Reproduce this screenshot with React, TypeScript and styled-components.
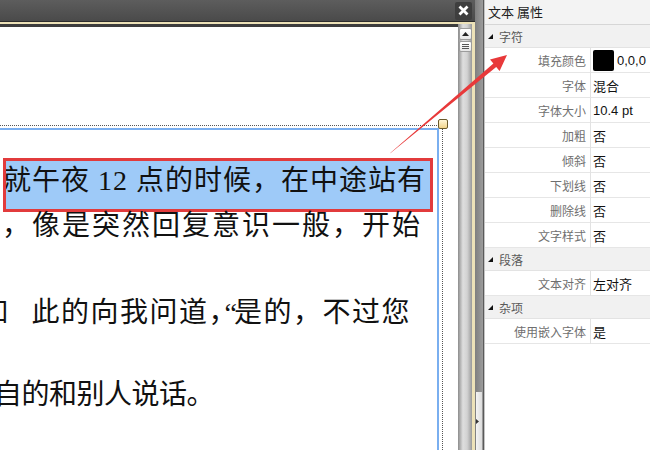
import styled, { createGlobalStyle } from "styled-components";

const GlobalStyle = createGlobalStyle`
  html, body {
    margin: 0;
    padding: 0;
    background: #fff;
    overflow: hidden;
  }
  #root {
    width: 650px;
    height: 450px;
  }
`;

const Screen = styled.div`
  position: relative;
  display: flex;
  width: 650px;
  height: 450px;
  overflow: hidden;
  font-family: "Noto Sans CJK SC", sans-serif;
`;

// left: document editor
const EditorPane = styled.div`
  display: flex;
  flex-direction: column;
  flex-shrink: 0;
  width: 475px;
`;

const TitleBar = styled.div`
  display: flex;
  justify-content: flex-end;
  align-items: center;
  box-sizing: border-box;
  height: 22px;
  padding-right: 3px;
  background: linear-gradient(#5d5d5d, #4a4a4a);
  border-bottom: 1px solid #2c2c2c;
`;

const CloseButton = styled.div`
  display: flex;
  justify-content: center;
  align-items: center;
  width: 17px;
  height: 18px;
  border-radius: 2px;
  background: #3e3e3e;
`;

const Frame = styled.div`
  display: flex;
  flex: 1;
  min-height: 0;
  border-top: 2px solid #ede2b8;
  border-right: 3px solid #ede2b8;
`;

const DocArea = styled.div`
  display: flex;
  flex-direction: column;
  flex: 1;
  min-width: 0;
  overflow: hidden;
  padding-top: 98px;
  background: #fff;
  border-top: 3px solid #3d3d3d;
`;

const TextFrame = styled.div`
  position: relative;
  flex: 1;
  margin-right: 15px;
  padding: 2px 3px 0 0;
  border-top: 1px dotted #555;
  border-right: 1px dotted #555;
`;

const Handle = styled.div`
  position: absolute;
  top: -7px;
  right: -6px;
  box-sizing: border-box;
  width: 10px;
  height: 10px;
  border: 1px solid #6b5a2a;
  border-radius: 2px;
  background: linear-gradient(#fff6d6, #f2d48a);
`;

const BlueBox = styled.div`
  height: 100%;
  padding-top: 28px;
  border-top: 2px solid #7aaff0;
  border-right: 2px solid #7aaff0;
`;

const Selection = styled.div`
  margin: 0 4px 0 3px;
  padding: 4px 0 12px;
  border: 3px solid #e23b3c;
  background: #9ecaf8;
  overflow: hidden;
`;

const Line = styled.div<{ $spacing: number; $shift: number; $gap?: number }>`
  height: 32px;
  margin-top: ${(p) => p.$gap ?? 0}px;
  margin-left: ${(p) => p.$shift}px;
  font-family: "Liberation Serif", "Noto Sans CJK SC", serif;
  font-size: 28px;
  line-height: 32px;
  letter-spacing: ${(p) => p.$spacing}px;
  white-space: nowrap;
  color: #111;
`;

const Cut = styled.span`
  margin-right: 22px;
`;

const Punct = styled.span<{ $squeeze: number }>`
  letter-spacing: ${(p) => p.$squeeze}px;
`;

const VScroll = styled.div`
  display: flex;
  flex-direction: column;
  align-items: center;
  gap: 1px;
  width: 14px;
  padding-top: 4px;
  background: linear-gradient(to right, #8c8c8c, #dedede 35%, #d2d2d2 65%, #9a9a9a);
`;

const ScrollPart = styled.div<{ $h: number }>`
  display: flex;
  justify-content: center;
  align-items: center;
  box-sizing: border-box;
  width: 13px;
  height: ${(p) => p.$h}px;
  border: 1px solid #9c9c9c;
  border-radius: 2px;
  background: linear-gradient(#ffffff, #e6e6e6);
`;

const Splitter = styled.div`
  display: flex;
  flex-direction: column;
  justify-content: flex-end;
  flex-shrink: 0;
  width: 8px;
  background: linear-gradient(to right, #7f7f7f, #9c9c9c);
  border-right: 1px solid #5a5a5a;
`;

const SplitHandle = styled.div`
  display: flex;
  align-items: center;
  width: 6px;
  height: 58px;
  margin-left: 1px;
  background: linear-gradient(to right, #f4f4f4, #dcdcdc);
`;

// right: properties panel
const Panel = styled.div`
  flex: 1;
  background: #fff;
  border-left: 1px solid #c4c4c4;
`;

const PanelHeader = styled.div`
  box-sizing: border-box;
  height: 25px;
  padding-left: 3px;
  font-size: 13px;
  line-height: 24px;
  color: #1e1e1e;
  background: #f3f3f3;
  border-bottom: 1px solid #d6d6d6;
`;

const Category = styled.div`
  display: flex;
  align-items: center;
  gap: 6px;
  box-sizing: border-box;
  height: 23px;
  padding-left: 3px;
  font-size: 12px;
  color: #5a5a5a;
  background: #f1f1f1;
  border-bottom: 1px solid #e3e3e3;
`;

const Row = styled.div`
  display: grid;
  grid-template-columns: 106px 1fr;
  box-sizing: border-box;
  height: 25px;
  border-bottom: 1px solid #e6e6e6;
`;

const Label = styled.div`
  box-sizing: border-box;
  padding-right: 4px;
  font-size: 12px;
  line-height: 25px;
  text-align: right;
  color: #6f6f6f;
  border-right: 1px solid #e2e2e2;
`;

const Value = styled.div`
  display: flex;
  align-items: center;
  gap: 3px;
  padding-left: 2px;
  font-family: "Liberation Sans", "Noto Sans CJK SC", sans-serif;
  font-size: 13px;
  color: #111;
`;

const Swatch = styled.div<{ $color: string }>`
  width: 21px;
  height: 21px;
  border-radius: 2px;
  background: ${(p) => p.$color};
`;

const Overlay = styled.svg`
  position: absolute;
  top: 0;
  left: 0;
  pointer-events: none;
`;

type Prop = { label: string; value: string; swatch?: string };

const sections: { title: string; rows: Prop[] }[] = [
  {
    title: "字符",
    rows: [
      { label: "填充颜色", value: "0,0,0", swatch: "#000" },
      { label: "字体", value: "混合" },
      { label: "字体大小", value: "10.4 pt" },
      { label: "加粗", value: "否" },
      { label: "倾斜", value: "否" },
      { label: "下划线", value: "否" },
      { label: "删除线", value: "否" },
      { label: "文字样式", value: "否" },
    ],
  },
  { title: "段落", rows: [{ label: "文本对齐", value: "左对齐" }] },
  { title: "杂项", rows: [{ label: "使用嵌入字体", value: "是" }] },
];

const Caret = () => (
  <svg width="5" height="5" viewBox="0 0 5 5">
    <polygon points="5,0 5,5 0,5" fill="#111" />
  </svg>
);

const App: React.FC = () => {
  return (
    <Screen>
      <GlobalStyle />
      <EditorPane>
        <TitleBar>
          <CloseButton>
            <svg width="11" height="11" viewBox="0 0 11 11">
              <path d="M1.5 1.5L9.5 9.5M9.5 1.5L1.5 9.5" stroke="#fff" strokeWidth="2.8" />
            </svg>
          </CloseButton>
        </TitleBar>
        <Frame>
          <DocArea>
            <TextFrame>
              <Handle />
              <BlueBox>
                <Selection>
                  <Line $spacing={1} $shift={-3}>
                    就午夜 12 点的时候，在中途站有
                  </Line>
                </Selection>
                <Line $spacing={2} $shift={2} $gap={-2}>
                  ，像是突然回复意识一般，开始
                </Line>
                <Line $spacing={1.5} $shift={-20} $gap={55}>
                  <Cut>如</Cut>此的向我问道<Punct $squeeze={-12}>，</Punct>
                  <Punct $squeeze={-3}>“</Punct>是的，不过您
                </Line>
                <Line $spacing={-0.5} $shift={-6} $gap={50}>
                  自的和别人说话。
                </Line>
              </BlueBox>
            </TextFrame>
          </DocArea>
          <VScroll>
            <ScrollPart $h={12}>
              <svg width="7" height="4" viewBox="0 0 7 4">
                <polygon points="3.5,0 7,4 0,4" fill="#222" />
              </svg>
            </ScrollPart>
            <ScrollPart $h={11}>
              <svg width="7" height="5" viewBox="0 0 7 5">
                <path d="M0 0.5H7M0 2.5H7M0 4.5H7" stroke="#555" strokeWidth="1" />
              </svg>
            </ScrollPart>
          </VScroll>
        </Frame>
      </EditorPane>
      <Splitter>
        <SplitHandle>
          <svg width="3" height="5" viewBox="0 0 3 5">
            <polygon points="0,0 3,2.5 0,5" fill="#333" />
          </svg>
        </SplitHandle>
      </Splitter>
      <Panel>
        <PanelHeader>文本 属性</PanelHeader>
        {sections.map((s) => (
          <div key={s.title}>
            <Category>
              <Caret />
              {s.title}
            </Category>
            {s.rows.map((r) => (
              <Row key={r.label}>
                <Label>{r.label}</Label>
                <Value>
                  {r.swatch && <Swatch $color={r.swatch} />}
                  {r.value}
                </Value>
              </Row>
            ))}
          </div>
        ))}
      </Panel>
      <Overlay width="650" height="450" viewBox="0 0 650 450">
        <polygon
          points="390,153.4 496.2,67 499.6,71 507,55 490,59.6 493.4,63.6 390.8,152.6"
          fill="#e8393a"
        />
      </Overlay>
    </Screen>
  );
};

export default App;
